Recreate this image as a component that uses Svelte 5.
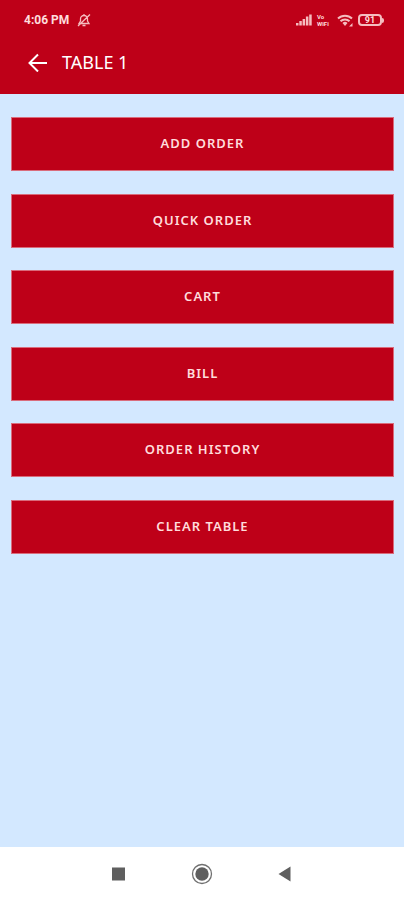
<script lang="ts">
    const actions = ["ADD ORDER", "QUICK ORDER", "CART", "BILL", "ORDER HISTORY", "CLEAR TABLE"];
</script>

<div class="screen">
    <header>
        <div class="status">
            <span class="time">4:06 PM</span>
            <svg class="bell" viewBox="0 0 14 14" width="14" height="14">
                <path d="M2 10.5h10l-1.500-2.500V6a3.500 3.500 0 0 0-7 0v2zM5.500 12.500h3M7 2.500V1M13 1.500l-12 11.500" />
            </svg>
            <div class="indicators">
                <svg viewBox="0 0 16 12" width="16" height="12">
                    <path class="fill" d="M0 9h2.500v2.500H0zM3.300 7h2.500v4.500H3.300zM6.600 5h2.500v6.500H6.600zM9.900 2.500h2.500v9H9.900zM13.200 .5h2.500v11h-2.500z" />
                </svg>
                <span class="volte"><span>Vo</span><span>WiFi</span></span>
                <svg viewBox="0 0 16 13" width="16" height="13">
                    <path class="arc" d="M1 4.500a10 10 0 0 1 14 0M3.500 7.200a6.500 6.500 0 0 1 9 0" />
                    <path class="fill" d="M5.500 9a3.500 3.500 0 0 1 5 0L8 12zM12 12.500l3.500-3.500v3.500z" />
                </svg>
                <span class="battery"><span class="level">91</span></span>
            </div>
        </div>
        <div class="toolbar">
            <button class="back" aria-label="Back">
                <svg viewBox="0 0 20 20" width="20" height="20">
                    <path d="M19 11H2M10 2.500L1.500 11l8.500 8.500" />
                </svg>
            </button>
            <h1>TABLE 1</h1>
        </div>
    </header>

    <main>
        <div class="actions">
            {#each actions as action (action)}
                <button class="action">{action}</button>
            {/each}
        </div>
    </main>

    <nav>
        <button aria-label="Recent apps">
            <svg viewBox="0 0 22 22" width="22" height="22">
                <rect x="4" y="4.500" width="13" height="13" fill="#5f5f5f" />
            </svg>
        </button>
        <button aria-label="Home">
            <svg viewBox="0 0 22 22" width="22" height="22">
                <circle cx="11" cy="11" r="9.500" fill="none" stroke="#707070" stroke-width="1.300" />
                <circle cx="11" cy="11" r="6.700" fill="#5f5f5f" />
            </svg>
        </button>
        <button aria-label="Back">
            <svg viewBox="0 0 22 22" width="22" height="22">
                <path d="M16.500 3.500v15L4.500 11z" fill="#5f5f5f" />
            </svg>
        </button>
    </nav>
</div>

<style>
    :global(body) {
        margin: 0;
    }

    .screen {
        display: flex;
        flex-direction: column;
        min-height: 100vh;
        background: #d3e8ff;
        font-family: "Noto Sans", sans-serif;
    }

    button {
        display: flex;
        align-items: center;
        justify-content: center;
        padding: 0;
        border: none;
        background: none;
        font-family: inherit;
        cursor: pointer;
    }

    svg {
        display: block;
    }

    header {
        padding-bottom: 11px;
        background: #be0018;
        color: #fff;
    }

    .status {
        display: flex;
        align-items: center;
        height: 40px;
        padding: 0 20px 0 24px;
        color: #ffdcdc;
    }

    .time {
        font: 700 12px/16px Roboto, sans-serif;
    }

    .bell {
        margin-left: 8px;
        fill: none;
        stroke: #f5bcbf;
        stroke-width: 1.3;
    }

    .indicators {
        display: flex;
        align-items: center;
        gap: 5px;
        margin-left: auto;
    }

    .fill {
        fill: #f5bcbf;
    }

    .arc {
        fill: none;
        stroke: #f5bcbf;
        stroke-width: 2;
    }

    .volte {
        display: flex;
        flex-direction: column;
        width: 15px;
        font: 700 6px/7px Roboto, sans-serif;
    }

    .battery {
        display: flex;
        align-items: center;
    }

    .battery::after {
        content: "";
        width: 2px;
        height: 5px;
        border-radius: 0 2px 2px 0;
        background: #f5bcbf;
    }

    .level {
        box-sizing: border-box;
        width: 24px;
        border: 2px solid #f5bcbf;
        border-radius: 4px;
        font: 700 9px/8px Roboto, sans-serif;
        text-align: center;
    }

    .toolbar {
        display: flex;
        align-items: center;
        gap: 14px;
        height: 43px;
        padding: 0 28px;
    }

    .back svg {
        fill: none;
        stroke: #fff;
        stroke-width: 2;
    }

    h1 {
        margin: 0;
        font-size: 18px;
        font-weight: 400;
        line-height: 24px;
    }

    main {
        flex: 1;
        padding: 23px 10px 0 11px;
    }

    .actions {
        display: grid;
        grid-auto-rows: 1fr;
        align-items: start;
        min-height: 459px;
    }

    .action {
        height: 54px;
        padding-bottom: 2px;
        border: 1px solid #d96c7c;
        background: #be0018;
        color: #ffdcdc;
        font-size: 13px;
        font-weight: 600;
        letter-spacing: 1px;
    }

    nav {
        display: flex;
        justify-content: center;
        gap: 61px;
        padding: 16px 0 15px;
        background: #fff;
    }
</style>
